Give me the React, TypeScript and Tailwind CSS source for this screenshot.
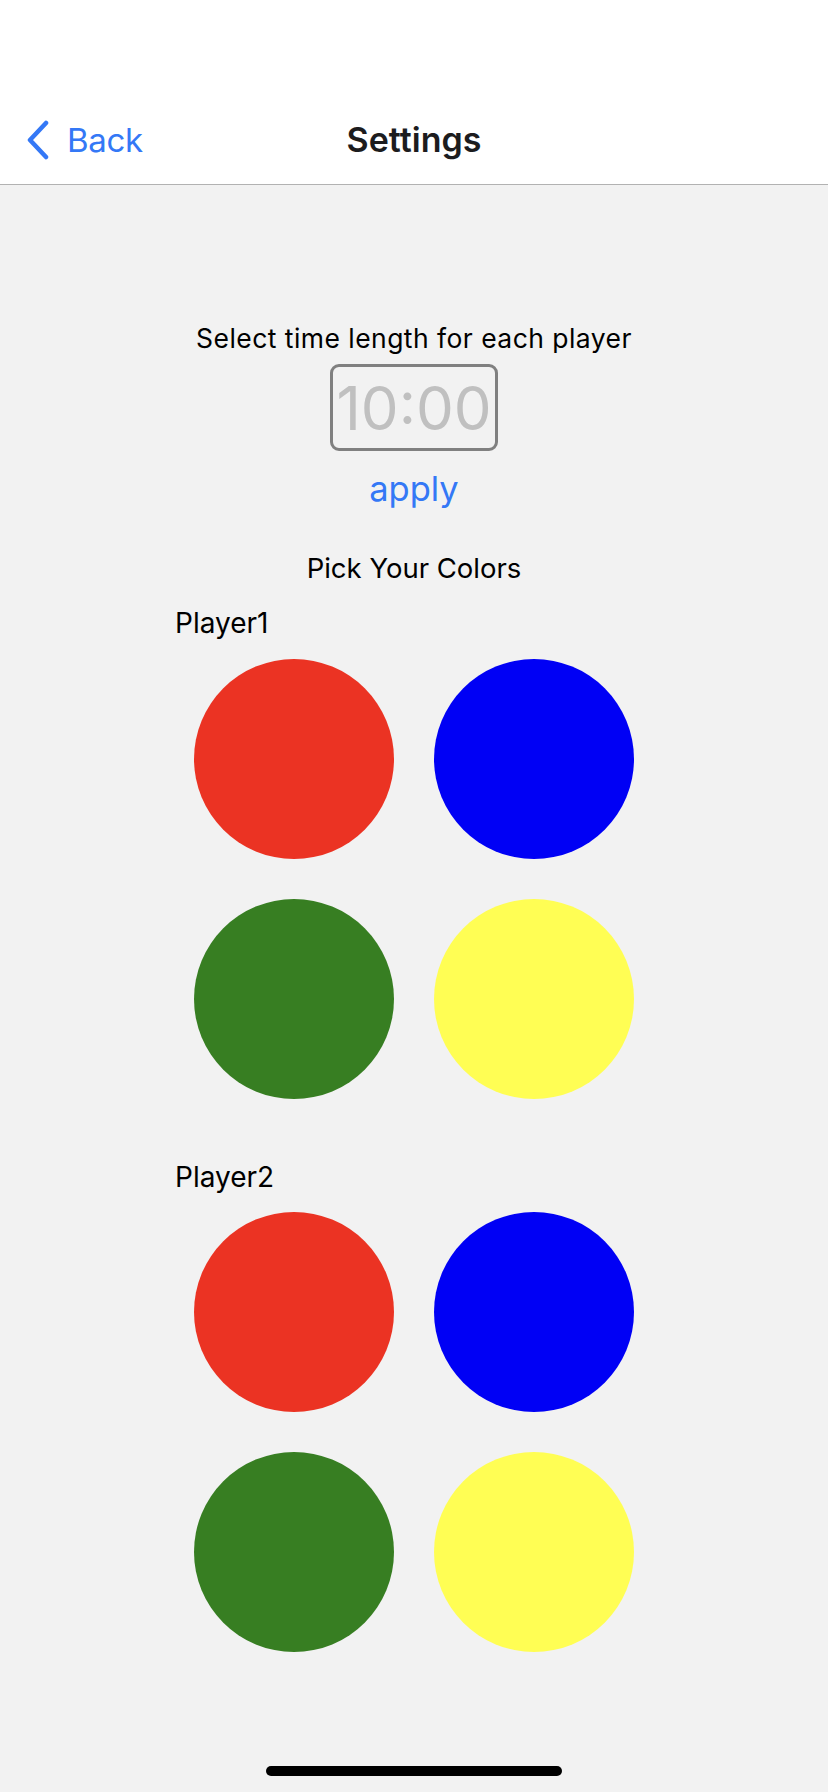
const COLORS = ["#eb3323", "#0000f5", "#377e22", "#fffe54"] as const;

function ColorGrid() {
  return (
    <div className="grid w-[440px] grid-cols-2 gap-[40px] self-center">
      {COLORS.map((c) => (
        <button
          key={c}
          className="h-[200px] w-[200px] rounded-full"
          style={{ backgroundColor: c }}
        />
      ))}
    </div>
  );
}

export default function App() {
  return (
    <div
      className="relative flex h-[1792px] w-[828px] flex-col overflow-hidden bg-[#f2f2f2] text-black"
      style={{ fontFamily: "Inter, 'Liberation Sans', sans-serif" }}
    >
      <header className="h-[185px] shrink-0 border-b border-[#b2b2b2] bg-white pt-[96px]">
        <div className="relative flex h-[88px] items-center">
          <button className="absolute left-[25px] flex items-center gap-[16px] text-[#3478f6]">
            <svg width="26" height="40" viewBox="0 0 26 40" fill="none">
              <path
                d="M21 3 L5 20 L21 37"
                stroke="currentColor"
                strokeWidth="4.5"
                strokeLinecap="round"
                strokeLinejoin="round"
              />
            </svg>
            <span className="text-[33px] leading-[40px] tracking-[-0.3px]">Back</span>
          </button>
          <h1 className="mx-auto text-[34px] font-semibold leading-[40px] text-[#1c1c1e]">
            Settings
          </h1>
        </div>
      </header>

      <main className="flex flex-col">
        <p className="mt-[137px] text-center text-[26.5px] leading-[32px] tracking-[0.45px]">
          Select time length for each player
        </p>
        <div className="mt-[10px] flex h-[87px] w-[168px] items-center justify-center self-center rounded-[9px] border-[3px] border-[#808080]">
          <span className="text-[60px] font-normal leading-none text-[#c0c0c0]">10:00</span>
        </div>
        <button className="mt-[16px] self-center text-[34.5px] leading-[44px] text-[#3478f6]">
          apply
        </button>

        <p className="mt-[40px] text-center text-[27.5px] leading-[34px]">Pick Your Colors</p>

        <p className="ml-[175px] mt-[21px] text-[28px] leading-[34px]">Player1</p>
        <div className="mt-[19px] flex flex-col">
          <ColorGrid />
        </div>

        <p className="ml-[175px] mt-[61px] text-[28px] leading-[34px]">Player2</p>
        <div className="mt-[18px] flex flex-col">
          <ColorGrid />
        </div>
      </main>

      <div className="absolute bottom-[16px] left-[266px] h-[10px] w-[296px] rounded-full bg-black" />
    </div>
  );
}
